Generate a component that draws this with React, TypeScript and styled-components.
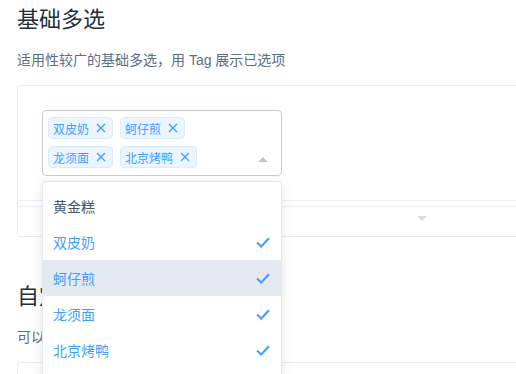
import React from "react";
import styled, { createGlobalStyle } from "styled-components";

const Global = createGlobalStyle`
  html, body { margin: 0; padding: 0; background: #fff; overflow: hidden; }
  body {
    font-family: "Helvetica Neue", "Liberation Sans", "Noto Sans CJK SC", sans-serif;
    -webkit-font-smoothing: antialiased;
  }
`;

const Page = styled.div`
  position: relative;
  padding-left: 17px;
  width: 900px;
`;

const Title = styled.h3`
  margin: 0;
  font-size: 22px;
  line-height: 40px;
  font-weight: 400;
  color: #1f2f3d;
`;

const Desc = styled.p`
  margin: 10px 0 14px;
  font-size: 14px;
  line-height: 21px;
  color: #5e6d82;
`;

const Card = styled.div`
  width: 808px;
  border: 1px solid #ebebeb;
  border-radius: 3px;
  margin-bottom: 40px;
`;

const Source = styled.div<{ $tall?: boolean }>`
  padding: 24px;
  min-height: ${(p) => (p.$tall ? "60px" : "0")};
`;

const Meta = styled.div`
  border-top: 1px solid #eaeefb;
  height: 5px;
`;

const Control = styled.div`
  border-top: 1px solid #eaeefb;
  display: flex;
  justify-content: center;
  padding-top: 9px;
  box-sizing: border-box;
  height: 30px;
`;

const SelectWrap = styled.div`
  position: relative;
  width: 240px;
`;

const SelectBox = styled.div`
  box-sizing: border-box;
  width: 240px;
  height: 66px;
  border: 1px solid #c4cdd8;
  border-radius: 4px;
  padding: 6px 30px 0 5px;
  display: flex;
  flex-wrap: wrap;
  align-content: flex-start;
  column-gap: 7px;
  row-gap: 7px;
`;

const Tag = styled.span`
  box-sizing: border-box;
  height: 22px;
  display: inline-flex;
  align-items: center;
  padding: 0 6px 0 4px;
  background: #ecf5ff;
  border: 1px solid #d9ecff;
  border-radius: 4px;
  color: #409eff;
  font-size: 12px;
  font-family: "Noto Sans CJK SC", sans-serif;
  gap: 7px;
`;

const Caret = styled.span<{ $down?: boolean }>`
  width: 0;
  height: 0;
  border-left: 5px solid transparent;
  border-right: 5px solid transparent;
  ${(p) =>
    p.$down
      ? "border-top: 5px solid #d3dce6;"
      : "border-bottom: 5px solid #bfc5ce;"}
`;

const SelectCaret = styled.div`
  position: absolute;
  right: 14px;
  top: 30px;
`;

const Dropdown = styled.div`
  position: absolute;
  top: calc(100% + 5px);
  left: 0;
  width: 240px;
  box-sizing: border-box;
  background: #fff;
  border: 1px solid #e4e7ed;
  border-radius: 4px;
  box-shadow: 0 2px 12px rgba(0, 0, 0, 0.1);
  padding: 6px 0;
  z-index: 10;
`;

const Option = styled.div<{ $selected?: boolean; $hover?: boolean }>`
  height: 36px;
  display: flex;
  align-items: center;
  justify-content: space-between;
  padding: 0 11px 0 10px;
  font-size: 14px;
  font-family: "Noto Sans CJK SC", sans-serif;
  color: ${(p) => (p.$selected ? "#409eff" : "#48576a")};
  background: ${(p) => (p.$hover ? "#e4e8f1" : "transparent")};
`;

const Close = () => (
  <svg width="10" height="10" viewBox="0 0 10 10">
    <path d="M1 1L9 9M9 1L1 9" stroke="#409eff" strokeWidth="1.3" fill="none" />
  </svg>
);

const Check = () => (
  <svg width="14" height="11" viewBox="0 0 14 11">
    <path d="M1 5.5L5.2 9.5L13 1.2" stroke="#409eff" strokeWidth="2" fill="none" />
  </svg>
);

const selected = ["双皮奶", "蚵仔煎", "龙须面", "北京烤鸭"];
const options = ["黄金糕", "双皮奶", "蚵仔煎", "龙须面", "北京烤鸭", "炸酱面"];

export default function App() {
  return (
    <>
      <Global />
      <Page>
        <Title>基础多选</Title>
        <Desc>适用性较广的基础多选，用 Tag 展示已选项</Desc>
        <Card>
          <Source>
            <SelectWrap>
              <SelectBox>
                {selected.map((s) => (
                  <Tag key={s}>
                    {s}
                    <Close />
                  </Tag>
                ))}
              </SelectBox>
              <SelectCaret>
                <Caret />
              </SelectCaret>
              <Dropdown>
                {options.map((o) => (
                  <Option key={o} $selected={selected.includes(o)} $hover={o === "蚵仔煎"}>
                    {o}
                    {selected.includes(o) && <Check />}
                  </Option>
                ))}
              </Dropdown>
            </SelectWrap>
          </Source>
          <Meta />
          <Control>
            <Caret $down />
          </Control>
        </Card>
        <Title>自定义模板</Title>
        <Desc>可以自定义备选项</Desc>
        <Card>
          <Source $tall />
        </Card>
      </Page>
    </>
  );
}
